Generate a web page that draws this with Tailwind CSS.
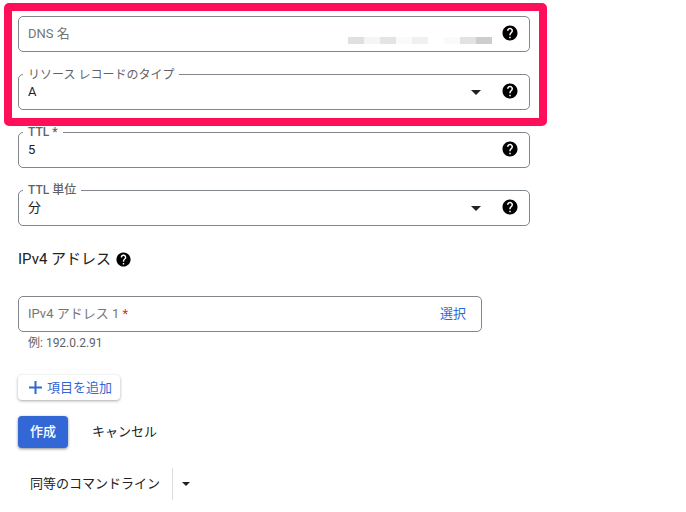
<!DOCTYPE html>
<html lang="ja">
<head>
    <meta charset="UTF-8">
    <title>DNS record</title>
    <script src="https://cdn.jsdelivr.net/npm/@tailwindcss/browser@4"></script>
</head>
<body class="bg-white w-[686px] h-[512px] overflow-hidden relative font-['Roboto','Noto_Sans_CJK_JP',sans-serif] text-[13px] text-[#202124]">
    <svg class="hidden">
        <symbol id="help" viewBox="0 0 24 24"><path d="M12 2C6.48 2 2 6.48 2 12s4.48 10 10 10 10-4.48 10-10S17.52 2 12 2zm1 17h-2v-2h2v2zm2.07-7.75-.9.92C13.45 12.9 13 13.5 13 15h-2v-.5c0-1.1.45-2.1 1.17-2.83l1.24-1.26c.37-.36.59-.86.59-1.41 0-1.1-.9-2-2-2s-2 .9-2 2H8c0-2.21 1.79-4 4-4s4 1.79 4 4c0 .88-.36 1.68-.93 2.25z"/></symbol>
    </svg>

    <div class="pt-4 pl-[18px] w-[530px] flex flex-col">
        <!-- DNS name -->
        <div class="relative h-9 w-[512px] border border-[#80868b] rounded-[5px] flex items-center justify-between pl-[9px] pr-[10px]">
            <span class="text-[#757575] -mt-[1px]">DNS 名</span>
            <div class="flex absolute left-[329px] top-[20px] h-[7px]">
                <i class="w-4 bg-[#e0e0e0]"></i><i class="w-4 bg-[#f5f5f5]"></i><i class="w-4 bg-[#e4e4e4]"></i><i class="w-4 bg-[#fafafa]"></i><i class="w-4 bg-[#f0f0f0]"></i><i class="w-4 bg-white"></i><i class="w-4 bg-[#fafafa]"></i><i class="w-4 bg-[#e2e2e2]"></i><i class="w-4 bg-[#cdcdcd]"></i>
            </div>
            <svg class="w-[18px] h-[18px] -mt-[3px]"><use href="#help"/></svg>
        </div>

        <!-- record type -->
        <div class="relative mt-[22px] h-9 w-[512px] border border-[#80868b] rounded-[5px] flex items-center justify-between pl-[9px] pr-[10px]">
            <span class="absolute left-[4px] -top-[7px] bg-white px-[5px] text-[12px] leading-[14px] text-[#5f6368]">リソース レコードのタイプ</span>
            <span class="-mt-[1px]">A</span>
            <div class="flex items-center gap-[20px]">
                <span class="w-0 h-0 border-x-[5px] border-x-transparent border-t-[5px] border-t-[#202124]"></span>
                <svg class="w-[18px] h-[18px] -mt-[3px]"><use href="#help"/></svg>
            </div>
        </div>

        <!-- TTL -->
        <div class="relative mt-[22px] h-9 w-[512px] border border-[#80868b] rounded-[5px] flex items-center justify-between pl-[9px] pr-[10px]">
            <span class="absolute left-[4px] -top-[8px] bg-white px-[5px] text-[12px] leading-[14px] font-medium text-[#5f6368]">TTL *</span>
            <span class="-mt-[1px]">5</span>
            <svg class="w-[18px] h-[18px] -mt-[3px]"><use href="#help"/></svg>
        </div>

        <!-- TTL unit -->
        <div class="relative mt-[22px] h-9 w-[512px] border border-[#80868b] rounded-[5px] flex items-center justify-between pl-[9px] pr-[10px]">
            <span class="absolute left-[4px] -top-[8px] bg-white px-[5px] text-[12px] leading-[14px] font-medium text-[#5f6368]">TTL 単位</span>
            <span class="-mt-[1px]">分</span>
            <div class="flex items-center gap-[20px]">
                <span class="w-0 h-0 border-x-[5px] border-x-transparent border-t-[5px] border-t-[#202124]"></span>
                <svg class="w-[18px] h-[18px] -mt-[3px]"><use href="#help"/></svg>
            </div>
        </div>

        <!-- IPv4 -->
        <div class="mt-[23px] h-5 flex items-center gap-[4px] text-[15px] text-[#202124]">
            <span>IPv4 アドレス</span>
            <svg class="w-[17px] h-[17px]"><use href="#help"/></svg>
        </div>

        <div class="mt-[27px] h-9 w-[464px] border border-[#80868b] rounded-[5px] flex items-center justify-between pl-[9px] pr-[15px]">
            <span class="text-[#757575] -mt-[1px]">IPv4 アドレス 1 <span class="text-[#d93025]">*</span></span>
            <span class="text-[#3367d6]">選択</span>
        </div>
        <p class="mt-[2px] pl-[10px] text-[12px] leading-[18px] text-[#5f6368]">例: 192.0.2.91</p>

        <button class="mt-[23px] w-[102px] h-[25px] rounded-[4px] bg-white shadow-[0_1px_3px_rgba(60,64,67,0.45)] flex items-center gap-[5px] pl-[11px] text-[#3367d6]">
            <svg class="w-[13px] h-[13px]" viewBox="0 0 13 13"><path d="M5.5 0h2v5.5H13v2H7.5V13h-2V7.5H0v-2h5.5z" fill="#3367d6"/></svg>
            <span>項目を追加</span>
        </button>

        <div class="mt-[16px] flex items-center">
            <button class="w-[50px] h-8 rounded-[4px] bg-[#3367d6] text-white font-medium shadow-[0_1px_3px_rgba(60,64,67,0.6)]">作成</button>
            <button class="ml-[24px] text-[#202124] -mt-[1px]">キャンセル</button>
        </div>

        <div class="mt-[20px] flex items-center h-8">
            <span class="ml-[12px] text-[#202124]">同等のコマンドライン</span>
            <span class="ml-[12px] w-px h-8 bg-[#dadce0]"></span>
            <span class="ml-[9px] w-0 h-0 border-x-[4px] border-x-transparent border-t-[4px] border-t-[#202124]"></span>
        </div>
    </div>

    <!-- highlight box drawn over the form -->
    <div class="absolute left-[4px] top-[3px] w-[543px] h-[123px] border-[8px] border-[#ff0f5a] rounded-[5px] pointer-events-none"></div>
</body>
</html>
